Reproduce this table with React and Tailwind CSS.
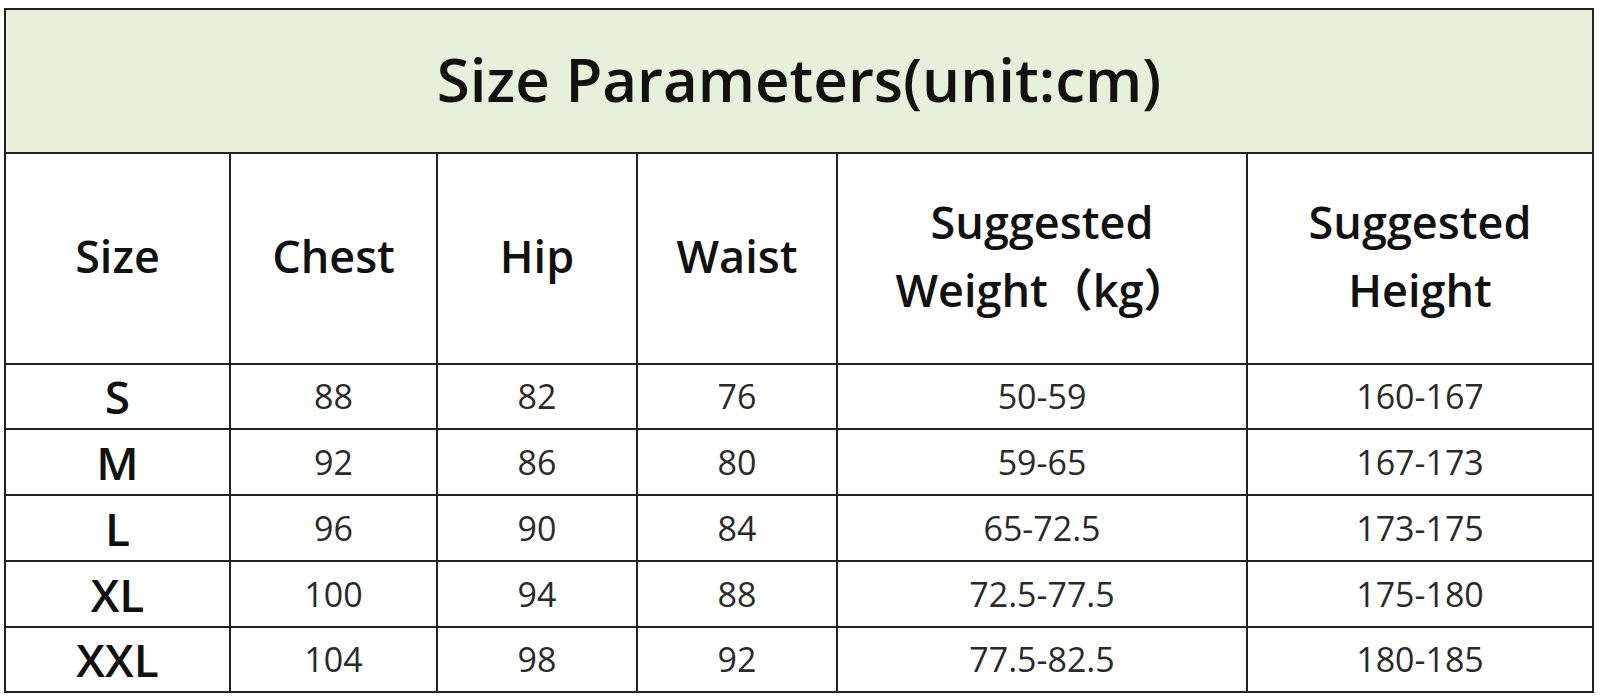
import React from 'react';

const font = { fontFamily: '"Open Sans", "Noto Sans CJK SC", sans-serif' };

const rows = [
    { size: 'S', chest: '88', hip: '82', waist: '76', weight: '50-59', height: '160-167' },
    { size: 'M', chest: '92', hip: '86', waist: '80', weight: '59-65', height: '167-173' },
    { size: 'L', chest: '96', hip: '90', waist: '84', weight: '65-72.5', height: '173-175' },
    { size: 'XL', chest: '100', hip: '94', waist: '88', weight: '72.5-77.5', height: '175-180' },
    { size: 'XXL', chest: '104', hip: '98', waist: '92', weight: '77.5-82.5', height: '180-185' },
];

const rowHeights = ['h-[65px]', 'h-[66px]', 'h-[66px]', 'h-[66px]', 'h-[65px]'];

const cell = 'flex items-center justify-center text-center border-r-2 border-b-2 border-[#222]';

const App = () => {
    return (
        <div className="w-[1600px] h-[700px] bg-white pt-[8px] pl-[4px]" style={font}>
            <div className="grid grid-cols-[225px_207px_200px_200px_410px_346px] w-[1590px] border-l-2 border-t-2 border-[#222]">
                {/* title */}
                <div className={`${cell} col-span-6 h-[144px] bg-[#e8f0dc] text-[60px] font-semibold text-[#111] pb-[4px]`}>
                    Size Parameters(unit:cm)
                </div>

                {/* header */}
                {['Size', 'Chest', 'Hip', 'Waist'].map((h) => (
                    <div key={h} className={`${cell} h-[211px] text-[45px] font-semibold text-[#111] pb-[6px]`}>
                        {h}
                    </div>
                ))}
                <div className={`${cell} h-[211px] text-[45px] font-semibold text-[#111] leading-[68px] pb-[6px]`}>
                    <div>
                        Suggested
                        <br />
                        Weight（kg）
                    </div>
                </div>
                <div className={`${cell} h-[211px] text-[45px] font-semibold text-[#111] leading-[68px] pb-[6px]`}>
                    <div>
                        Suggested
                        <br />
                        Height
                    </div>
                </div>

                {/* data */}
                {rows.map((r, i) => (
                    <React.Fragment key={r.size}>
                        <div className={`${cell} ${rowHeights[i]} text-[46px] font-semibold text-[#111]`}>{r.size}</div>
                        <div className={`${cell} ${rowHeights[i]} text-[34px] text-[#2a2a2a]`}>{r.chest}</div>
                        <div className={`${cell} ${rowHeights[i]} text-[34px] text-[#2a2a2a]`}>{r.hip}</div>
                        <div className={`${cell} ${rowHeights[i]} text-[34px] text-[#2a2a2a]`}>{r.waist}</div>
                        <div className={`${cell} ${rowHeights[i]} text-[34px] text-[#2a2a2a]`}>{r.weight}</div>
                        <div className={`${cell} ${rowHeights[i]} text-[34px] text-[#2a2a2a]`}>{r.height}</div>
                    </React.Fragment>
                ))}
            </div>
        </div>
    );
};

export default App;
